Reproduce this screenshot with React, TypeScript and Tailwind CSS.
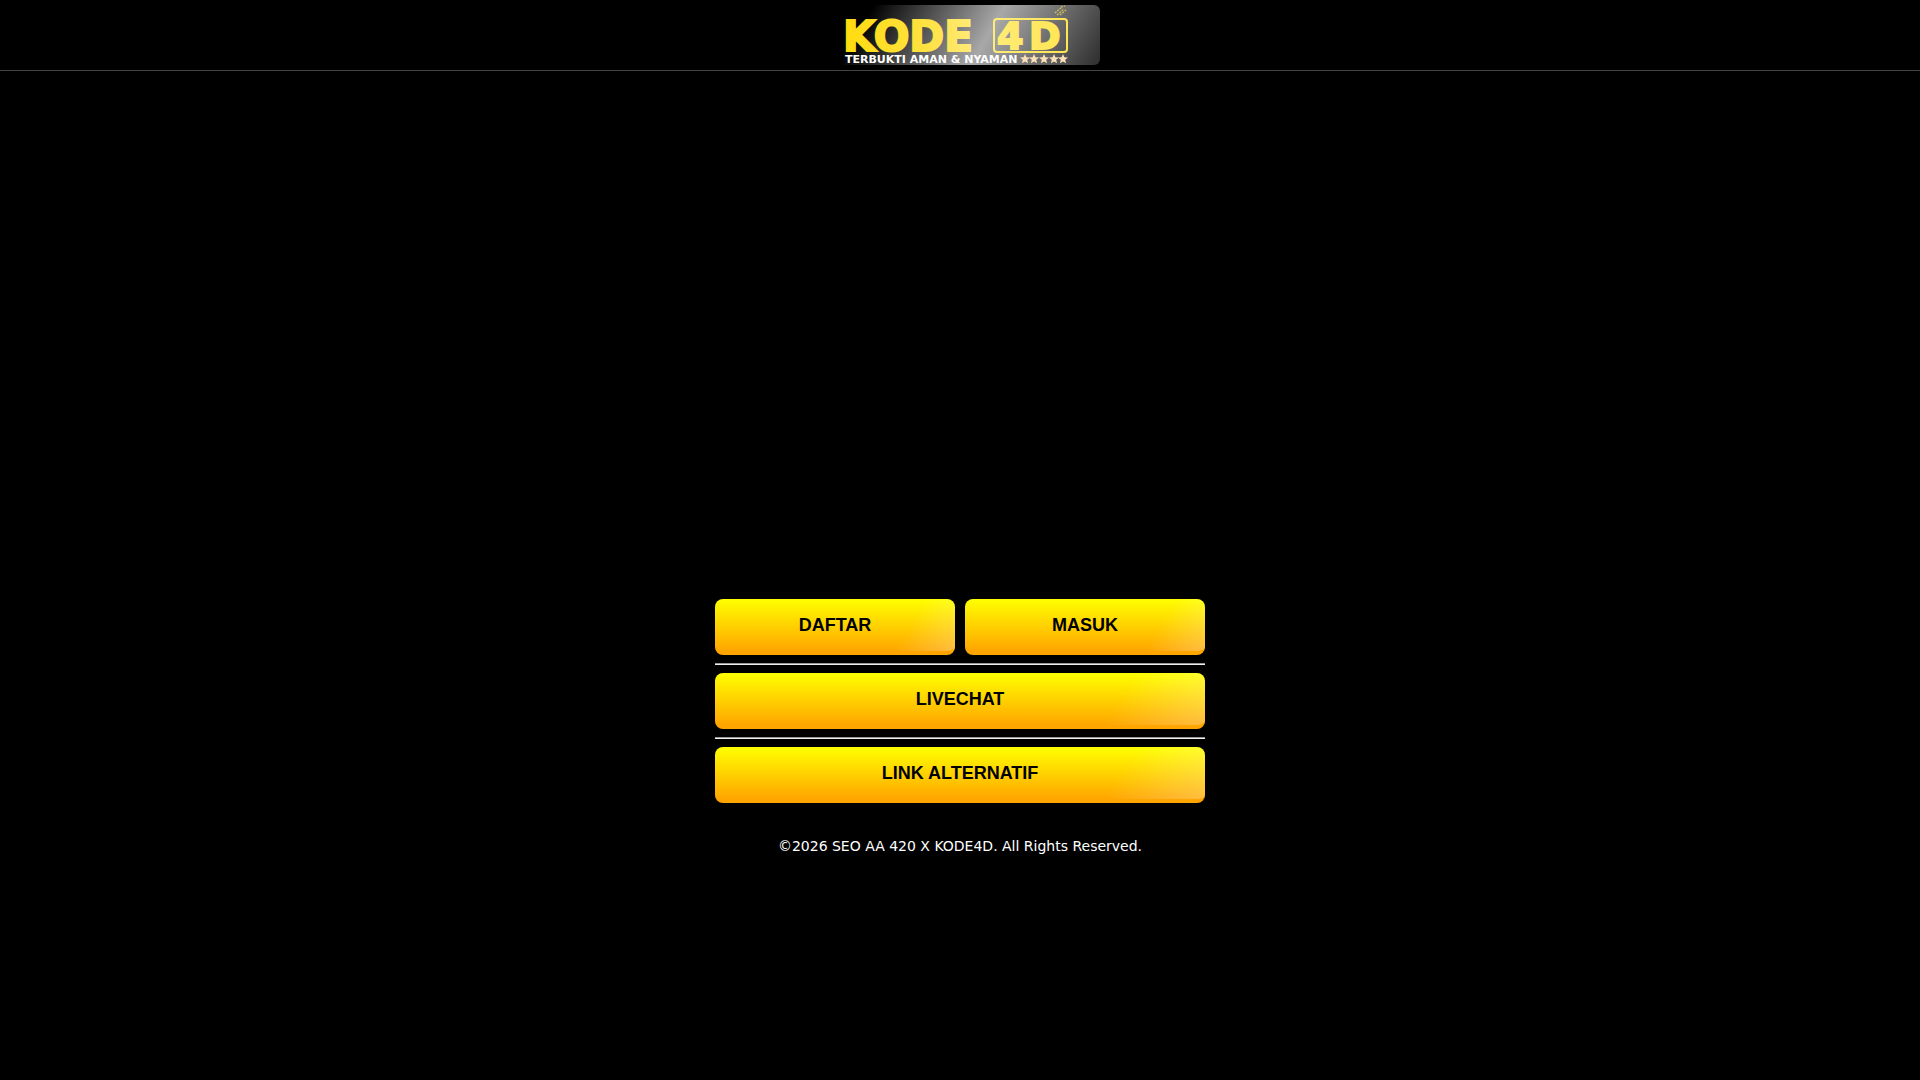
import clsx from 'clsx'

const STAR = 'M0 -5 L1.4 -1.7 L5 -1.5 L2.2 .8 L3.1 4.3 L0 2.4 L-3.1 4.3 L-2.2 .8 L-5 -1.5 L-1.4 -1.7 Z'

function Logo() {
  return (
    <svg viewBox="0 0 280 60" className="block h-[60px] w-[280px]" role="img" aria-label="KODE4D">
      <defs>
        <linearGradient id="gold" x1="25" y1="0" x2="250" y2="0" gradientUnits="userSpaceOnUse">
          <stop offset="0" stopColor="#ffdc10" />
          <stop offset="0.35" stopColor="#ffe140" />
          <stop offset="0.6" stopColor="#ffec80" />
          <stop offset="1" stopColor="#ffe650" />
        </linearGradient>
      </defs>
      <g fill="url(#gold)" stroke="url(#gold)" strokeWidth="2" fontFamily="DejaVu Sans" fontWeight="700">
        <text x="23" y="46" fontSize="42">KODE</text>
        <text x="177" y="44" fontSize="38">4</text>
        <text x="209" y="44" fontSize="38">D</text>
      </g>
      <rect x="174" y="14" width="73" height="33" rx="3" fill="none" stroke="url(#gold)" strokeWidth="2" />
      <text x="25" y="58" fontSize="11" fontFamily="DejaVu Sans" fontWeight="700" fill="#ffffff">
        TERBUKTI AMAN &amp; NYAMAN
      </text>
      <g fill="#fbe0b8">
        {[205, 214, 224, 234, 243].map((x) => (
          <path key={x} d={STAR} transform={`translate(${x} 54)`} />
        ))}
      </g>
      <g stroke="#d8c45c" strokeWidth="1.2" strokeDasharray="2 1" fill="none">
        <path d="M235 8 L242 2 M237 10 L244 4 M240 10 L246 5 M241 2 L245 1" />
      </g>
    </svg>
  )
}

function ActionButton({ label, wide }: { label: string; wide?: boolean }) {
  return (
    <button
      type="button"
      className={clsx(
        'relative flex-1 cursor-pointer overflow-hidden rounded-lg border-b-4 border-[#ffa500] bg-gradient-to-b from-[#ffff00] to-[#ffa500]',
        'h-14 font-[Liberation_Sans,Arial,sans-serif] text-lg font-bold text-black'
      )}
    >
      {label}
      <span
        className={clsx(
          'absolute inset-y-0 right-0 bg-[linear-gradient(120deg,transparent_36%,rgba(255,255,255,0.25))]',
          wide ? 'w-32' : 'w-16'
        )}
      />
    </button>
  )
}

function Divider() {
  return <hr className="my-2 border-t border-b border-t-[#9a9a9a] border-b-[#eeeeee]" />
}

export default function App() {
  return (
    <div className="min-h-screen bg-black font-[DejaVu_Sans,sans-serif] text-white">
      <header className="flex justify-center border-b border-[#444444] py-[5px]">
        <a
          href="#"
          className="rounded-md bg-[linear-gradient(120deg,#000000_17%,#a8a8a8_59%,#333333_98%)]"
        >
          <Logo />
        </a>
      </header>

      <main className="mx-auto max-w-[490px] pt-[528px]">
        <div className="flex gap-2.5">
          <ActionButton label="DAFTAR" />
          <ActionButton label="MASUK" />
        </div>
        <Divider />
        <div className="flex">
          <ActionButton label="LIVECHAT" wide />
        </div>
        <Divider />
        <div className="flex">
          <ActionButton label="LINK ALTERNATIF" wide />
        </div>
      </main>

      <footer className="py-8 text-center text-sm leading-[22px]">
        ©2026 SEO AA 420 X KODE4D. All Rights Reserved.
      </footer>
    </div>
  )
}
